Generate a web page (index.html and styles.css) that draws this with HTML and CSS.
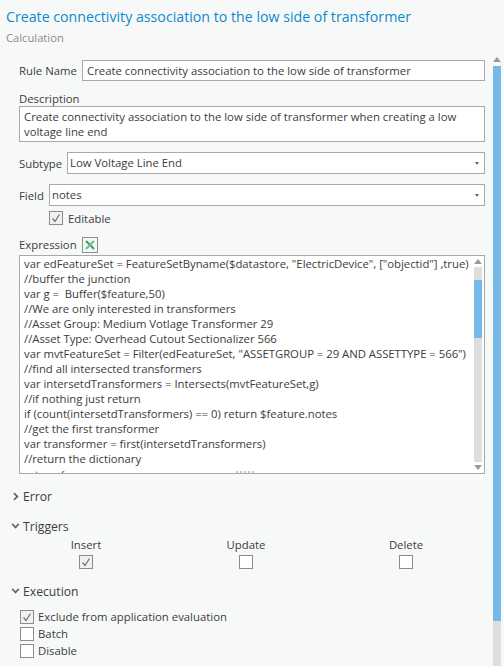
FILE: index.html
```html
<!DOCTYPE html>
<html lang="en">
<head>
<meta charset="utf-8">
<title>Calculation rule</title>
<link rel="stylesheet" href="styles.css">
</head>
<body>
<div class="page">
  <main class="pane">
    <h1 class="title">Create connectivity association to the low side of transformer</h1>
    <div class="subtitle">Calculation</div>
    <div class="form">
      <div class="row row-name">
        <label class="lbl">Rule Name</label>
        <div class="field grow">Create connectivity association to the low side of transformer</div>
      </div>
      <label class="lbl desc-lbl">Description</label>
      <div class="field area">Create connectivity association to the low side of transformer when creating a low voltage line end</div>
      <div class="row row-subtype">
        <label class="lbl">Subtype</label>
        <div class="field select grow">Low Voltage Line End<span class="caret"></span></div>
      </div>
      <div class="row row-field">
        <label class="lbl">Field</label>
        <div class="field select grow">notes<span class="caret"></span></div>
      </div>
      <div class="check-line editable"><span class="box checked"><svg viewBox="0 0 12 12"><path d="M2.5 6.5 5 9.5 9.5 2.5"/></svg></span>Editable</div>
      <div class="expr-head">
        <label class="lbl">Expression</label>
        <span class="xl"><svg viewBox="0 0 14 14"><path class="xa" d="M3 3 11 11"/><path class="xb" d="M11 3 3 11"/></svg></span>
      </div>
      <div class="editor">
        <div class="code">
          <div>var edFeatureSet = FeatureSetByname($datastore, "ElectricDevice", ["objectid"] ,true)</div>
          <div>//buffer the junction</div>
          <div>var g =&nbsp; Buffer($feature,50)</div>
          <div>//We are only interested in transformers</div>
          <div>//Asset Group: Medium Votlage Transformer 29</div>
          <div>//Asset Type: Overhead Cutout Sectionalizer 566</div>
          <div>var mvtFeatureSet = Filter(edFeatureSet, "ASSETGROUP = 29 AND ASSETTYPE = 566")</div>
          <div>//find all intersected transformers</div>
          <div>var intersetdTransformers = Intersects(mvtFeatureSet,g)</div>
          <div>//if nothing just return</div>
          <div>if (count(intersetdTransformers) == 0) return $feature.notes</div>
          <div>//get the first transformer</div>
          <div>var transformer = first(intersetdTransformers)</div>
          <div>//return the dictionary</div>
          <div class="last-line">return {</div>
        </div>
        <span class="grip"></span>
        <div class="vbar">
          <span class="arrow up"></span>
          <div class="track"><div class="thumb"></div></div>
          <span class="arrow down"></span>
        </div>
      </div>
    </div>
    <section class="error-sec"><h2 class="sec"><span class="chev right"></span>Error</h2></section>
    <section class="trig-sec">
      <h2 class="sec"><span class="chev down"></span>Triggers</h2>
      <div class="triggers">
        <div class="trig"><span>Insert</span><span class="box checked"><svg viewBox="0 0 12 12"><path d="M2.5 6.5 5 9.5 9.5 2.5"/></svg></span></div>
        <div class="trig"><span>Update</span><span class="box"></span></div>
        <div class="trig"><span>Delete</span><span class="box"></span></div>
      </div>
    </section>
    <section class="exec-sec">
      <h2 class="sec"><span class="chev down"></span>Execution</h2>
      <div class="exec-list">
        <div class="check-line"><span class="box checked"><svg viewBox="0 0 12 12"><path d="M2.5 6.5 5 9.5 9.5 2.5"/></svg></span>Exclude from application evaluation</div>
        <div class="check-line"><span class="box"></span>Batch</div>
        <div class="check-line"><span class="box"></span>Disable</div>
      </div>
    </section>
  </main>
  <aside class="pagebar">
    <span class="arrow up"></span>
    <div class="track"><div class="thumb"></div></div>
  </aside>
</div>
</body>
</html>
```
FILE: styles.css
```css
* { box-sizing: border-box; }
html, body { margin: 0; height: 100%; }
body {
  background: #f7f9f9;
  color: #3c3c3c;
  font-family: "Open Sans", "Liberation Sans", sans-serif;
  font-size: 11.35px;
  overflow: hidden;
}
.page { display: flex; height: 666px; overflow: hidden; }
.pane { width: 493px; flex: none; padding: 0 8px 0 0; }
.title {
  margin: 0;
  padding: 7px 0 0 6px;
  height: 29px;
  font-size: 14.2px;
  line-height: 20px;
  font-weight: 400;
  color: #0e89cd;
  white-space: nowrap;
}
.subtitle { padding-left: 6px; height: 31px; line-height: 18px; color: #8b8b8b; font-size: 11.2px; }
.form { padding-left: 19px; }
.lbl { white-space: nowrap; display: block; }
.row { display: flex; align-items: center; }
.grow { flex: 1; min-width: 0; }
.field {
  background: #fff;
  border: 1px solid #a9a9a9;
  padding: 0 4px;
  position: relative;
  white-space: nowrap;
}
.row-name { height: 21px; }
.row-name .lbl { width: 63px; }
.row-name .field { height: 21px; line-height: 19px; padding-left: 4px; }
.desc-lbl { margin-top: 9px; height: 16px; line-height: 18px; }
.area { height: 36px; white-space: normal; line-height: 15px; padding: 2px 4px 0 4px; }
.row-subtype { margin-top: 10px; height: 22px; }
.row-subtype .lbl { width: 48px; }
.row-field { margin-top: 10px; height: 22px; }
.row-field .lbl { width: 30px; }
.select { height: 22px; line-height: 20px; padding-left: 2px; }
.caret {
  position: absolute;
  right: 5px;
  top: 9px;
  border-left: 2.5px solid transparent;
  border-right: 2.5px solid transparent;
  border-top: 3px solid #666;
}
.check-line { display: flex; align-items: center; gap: 4px; height: 17px; white-space: nowrap; }
.editable { margin: 4px 0 0 30px; height: 16px; gap: 5px; }
.box {
  width: 14px;
  height: 14px;
  flex: none;
  background: #fff;
  border: 1px solid #8c8c8c;
  display: inline-block;
}
.box.checked { background: #f1f1f1; }
.box svg { display: block; width: 12px; height: 12px; fill: none; stroke: #6e6e6e; stroke-width: 1.2; }
.expr-head { display: flex; align-items: center; gap: 5px; margin-top: 10px; height: 17px; line-height: 19px; }
.xl {
  width: 16px;
  height: 16px;
  border: 1px solid #8e8e8e;
  background: #f4f8f4;
}
.xl svg { display: block; width: 14px; height: 14px; fill: none; stroke-width: 2; }
.xa { stroke: #3a9a62; }
.xb { stroke: #6cbb8c; }
.editor {
  margin-top: 2px;
  height: 219px;
  background: #fff;
  border: 1px solid #a9a9a9;
  display: flex;
  overflow: hidden;
  position: relative;
}
.code { flex: 1; min-width: 0; padding: 0 0 0 4px; line-height: 15px; white-space: nowrap; overflow: hidden; letter-spacing: -0.03px; }
.last-line { margin-top: 1px; }
.grip {
  position: absolute;
  left: 216px;
  bottom: 0;
  width: 19px;
  height: 2px;
  background: repeating-linear-gradient(90deg, #c4c4c4 0 2px, transparent 2px 4px);
}
.vbar { width: 8px; margin-right: 2px; flex: none; display: flex; flex-direction: column; align-items: center; }
.vbar .track { flex: 1; width: 8px; background: #dedede; }
.vbar .thumb { margin-top: 13px; height: 58px; background: #74b9e7; }
.vbar .arrow.up { margin: 3px 0 3px; }
.vbar .arrow.down { margin: 3px 0 3px; }
.arrow { display: block; width: 0; height: 0; border-left: 4px solid transparent; border-right: 4px solid transparent; flex: none; }
.arrow.up { border-bottom: 5px solid #9a9a9a; }
.arrow.down { border-top: 5px solid #9a9a9a; }
.sec {
  margin: 0;
  display: flex;
  align-items: center;
  font-size: 12.2px;
  font-weight: 400;
  height: 18px;
  color: #3c3c3c;
}
.chev { width: 12px; margin-left: 11px; margin-right: 0; height: 8px; position: relative; flex: none; }
.chev::before {
  content: "";
  position: absolute;
  left: 1px;
  top: 0;
  width: 5px;
  height: 5px;
  border-right: 2px solid #666;
  border-bottom: 2px solid #666;
}
.chev.down::before { transform: rotate(45deg) scale(.8); left: 1px; top: -1px; }
.chev.right::before { transform: rotate(-45deg) scale(.8); left: 0; top: 1px; }
.error-sec { margin-top: 13px; }
.trig-sec { margin-top: 12px; }
.triggers { display: grid; grid-template-columns: 160px 160px 160px; padding-left: 6px; margin-top: 2px; }
.trig { display: flex; flex-direction: column; align-items: center; gap: 2px; line-height: 16px; }
.exec-sec { margin-top: 13px; }
.exec-list { padding: 8px 0 0 20px; }
.pagebar { width: 8px; flex: none; display: flex; flex-direction: column; align-items: center; padding-top: 57px; }
.pagebar .arrow { margin-bottom: 4px; }
.pagebar .track { flex: 1; width: 8px; background: #dedede; }
.pagebar .thumb { height: 555px; background: #74b9e7; }
```
